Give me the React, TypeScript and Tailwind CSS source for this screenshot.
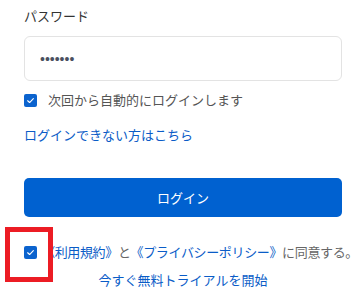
import React from 'react';

const CheckBox: React.FC = () => (
  <span className="flex h-[13px] w-[13px] shrink-0 items-center justify-center rounded-[2px] bg-[#0b63ce]">
    <svg viewBox="0 0 12 12" className="h-[9px] w-[9px]" fill="none">
      <path d="M2.2 6.3 L4.8 8.7 L9.8 3.4" stroke="#fff" strokeWidth="1.5" strokeLinecap="round" strokeLinejoin="round" />
    </svg>
  </span>
);

const App: React.FC = () => {
  return (
    <div className="relative h-[305px] w-[362px] overflow-hidden bg-white font-['Noto_Sans_CJK_JP','Noto_Sans',sans-serif] text-[13px] leading-[18px]">
      <div className="pl-6 pr-5 pt-[7px]">
        <label className="block text-[#333]">パスワード</label>
        <input
          type="password"
          readOnly
          value="1234567"
          className="mt-[11px] block h-[45px] w-full rounded-md border border-[#e3e3e3] pl-[15px] font-['Liberation_Sans',sans-serif] text-[14px] text-[#4a5060] outline-none"
        />

        <div className="mt-[10px] flex items-center gap-[11px]">
          <CheckBox />
          <span className="text-[#555]">次回から自動的にログインします</span>
        </div>

        <a className="mt-[17px] block text-[#0a5cc7]">ログインできない方はこちら</a>

        <button className="mt-[34px] flex h-[39px] w-full items-center justify-center rounded-[5px] bg-[#0061d0] text-white">
          ログイン
        </button>

        <div className="mt-[26px] flex items-center gap-[5px] whitespace-nowrap">
          <CheckBox />
          <span className="tracking-[-0.35px] text-[#666]">
            <a className="text-[#0a5cc7]">《利用規約》</a>と<a className="text-[#0a5cc7]">《プライバシーポリシー》</a>に同意する。
          </span>
        </div>

        <p className="mt-[10px] text-center text-[#0a5cc7]">今すぐ無料トライアルを開始</p>
      </div>

      <div className="absolute left-[5px] top-[227px] h-[55px] w-[48px] border-[5px] border-[#ec1c24]" />
    </div>
  );
};

export default App;
